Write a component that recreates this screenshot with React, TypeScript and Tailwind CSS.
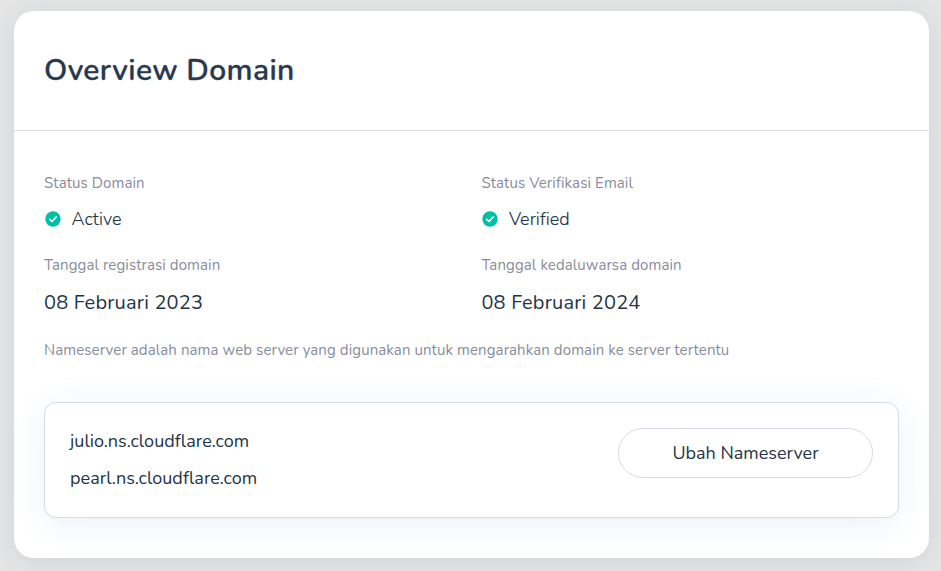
import type { ReactNode } from 'react';

function CheckBadge() {
  return (
    <svg width="16" height="16" viewBox="0 0 16 16" className="ml-px shrink-0" aria-hidden="true">
      <circle cx="8" cy="8" r="7.7" fill="#00bfa5" />
      <path d="M4.7 8.3 7 10.4 11.2 6" fill="none" stroke="#fff" strokeWidth="1.7" strokeLinecap="round" strokeLinejoin="round" />
    </svg>
  );
}

function Label({ className = '', children }: { className?: string; children: ReactNode }) {
  return <p className={`h-6 whitespace-nowrap text-[15px] leading-6 tracking-[0.1px] text-[#898c9b] ${className}`}>{children}</p>;
}

function Status({ children }: { children: ReactNode }) {
  return (
    <div className="mt-3 flex h-6 items-center text-lg font-light leading-6">
      <CheckBadge />
      <span className="ml-[10.5px] tracking-[0.05px] [-webkit-text-stroke:0.15px_currentColor]">{children}</span>
    </div>
  );
}

function DateValue({ children }: { children: ReactNode }) {
  return <p className="mt-3.5 h-6 text-xl leading-6 tracking-[0.2px]">{children}</p>;
}

export default function App() {
  return (
    <main className="h-[571px] overflow-hidden bg-[#e5e5e5] pl-3.5 pr-3 pt-[11px] font-[Nunito,Lato,sans-serif] text-[#253446]">
      <section className="h-[547px] rounded-[20px] bg-white shadow-[0_4px_24px_rgba(160,175,190,0.3)]">
        <header className="flex h-[120px] items-center border-b border-[#d9dbe4] px-[30px]">
          <h1 className="text-3xl font-semibold leading-9 tracking-[0.38px] text-[#29384f] [-webkit-text-stroke:0.3px_currentColor]">Overview Domain</h1>
        </header>
        <div className="px-[30px] pt-10">
          <div className="grid grid-cols-[437.4px_1fr]">
            <div>
              <Label>Status Domain</Label>
              <Status>Active</Status>
            </div>
            <div>
              <Label>Status Verifikasi Email</Label>
              <Status>Verified</Status>
            </div>
            <div className="mt-[22px]">
              <Label>Tanggal registrasi domain</Label>
              <DateValue>08 Februari 2023</DateValue>
            </div>
            <div className="mt-[22px]">
              <Label>Tanggal kedaluwarsa domain</Label>
              <DateValue>08 Februari 2024</DateValue>
            </div>
          </div>
          <Label className="mt-[23px]">
            Nameserver adalah nama web server yang digunakan untuk mengarahkan domain ke server tertentu
          </Label>
          <div className="mt-10 flex h-[116px] items-start justify-between rounded-[12px] border border-[#d7dbe3] bg-white p-[25px] shadow-[0_5px_32px_rgba(130,165,205,0.16)]">
            <div className="pt-px text-lg leading-6 tracking-[0.04px]">
              <p>julio.ns.cloudflare.com</p>
              <p className="mt-[13px]">pearl.ns.cloudflare.com</p>
            </div>
            <button className="h-[50px] w-[255px] rounded-full border border-[#d9dbe4] text-lg leading-6">
              Ubah Nameserver
            </button>
          </div>
        </div>
      </section>
    </main>
  );
}
